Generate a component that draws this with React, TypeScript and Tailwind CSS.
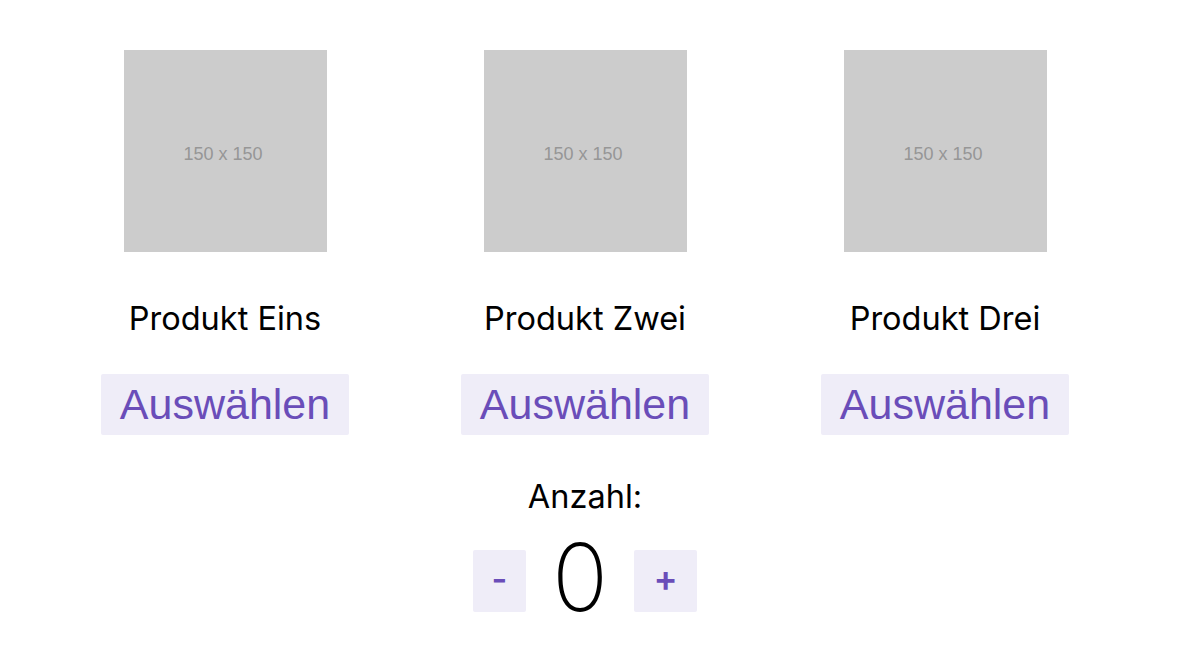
import { useState } from 'react';

const products = ['Produkt Eins', 'Produkt Zwei', 'Produkt Drei'];

function Placeholder() {
  return (
    <div className="w-[203px] h-[202px] bg-[#cccccc] flex items-center justify-center">
      <span className="mt-[6px] -ml-[4px] text-[18px] text-[#969696] font-['Liberation_Sans',Arial,sans-serif]">150 x 150</span>
    </div>
  );
}

export default function App() {
  const [count, setCount] = useState(0);
  const [selected, setSelected] = useState<string | null>(null);

  return (
    <div className="min-h-screen bg-white font-['Inter',sans-serif] text-black">
      <div className="w-[1080px] ml-[45px] pt-[50px]">
        {/* product cards */}
        <div className="grid grid-cols-3">
          {products.map((name) => (
            <div key={name} className="flex flex-col items-center">
              <Placeholder />
              <h2 className="mt-[47px] text-[32.5px] leading-[40px] font-normal">{name}</h2>
              <button
                onClick={() => setSelected(name)}
                className={`mt-[35px] h-[61px] px-[19px] rounded-[2px] bg-[#efedf8] text-[#6a4db9] text-[43px] leading-none font-['Liberation_Sans',Arial,sans-serif] ${selected === name ? 'ring-1 ring-[#6a4db9]' : ''}`}
              >
                Auswählen
              </button>
            </div>
          ))}
        </div>

        {/* counter */}
        <div className="flex flex-col items-center mt-[42px]">
          <span className="text-[32.5px] leading-[40px]">Anzahl:</span>
          <div className="flex items-center gap-[26px] mt-[33px]">
            <button
              onClick={() => setCount((c) => Math.max(0, c - 1))}
              className="h-[62px] w-[53px] flex items-center justify-center pb-[4px] rounded-[2px] bg-[#efedf8] text-[#6a4db9] text-[34px] font-semibold leading-none"
            >
              -
            </button>
            <span className="text-[93px] leading-[70px] font-extralight -mt-[8px]">{count}</span>
            <button
              onClick={() => setCount((c) => c + 1)}
              className="h-[62px] w-[63px] flex items-center justify-center pb-[6px] rounded-[2px] bg-[#efedf8] text-[#6a4db9] text-[36px] font-semibold leading-none"
            >
              +
            </button>
          </div>
        </div>
      </div>
    </div>
  );
}
